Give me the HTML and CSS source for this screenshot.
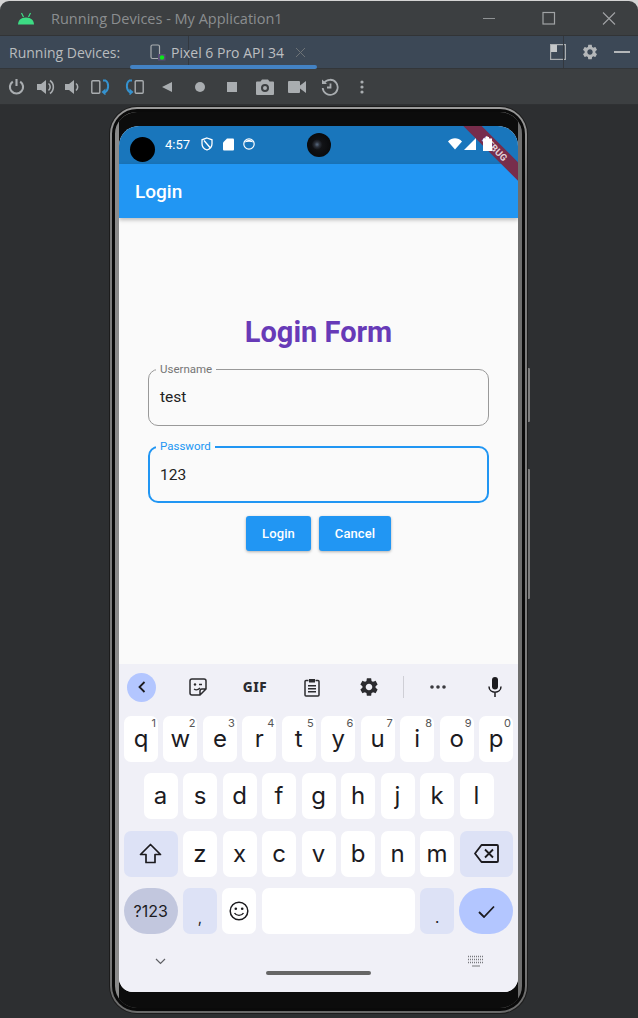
FILE: index.html
```html
<!DOCTYPE html>
<html lang="en">
<head>
  <meta charset="UTF-8">
  <title>Running Devices - My Application1</title>
  <link rel="stylesheet" href="styles.css">
</head>
<body>
  <svg class="defs" width="0" height="0">
    <symbol id="gear" viewBox="0 0 24 24">
      <path fill="currentColor" d="M19.14 12.94c.04-.3.06-.61.06-.94 0-.32-.02-.64-.07-.94l2.03-1.58c.18-.14.23-.41.12-.61l-1.92-3.32c-.12-.22-.37-.29-.59-.22l-2.39.96c-.5-.38-1.03-.7-1.62-.94l-.36-2.54c-.04-.24-.24-.41-.48-.41h-3.84c-.24 0-.43.17-.47.41l-.36 2.54c-.59.24-1.13.57-1.62.94l-2.39-.96c-.22-.08-.47 0-.59.22L2.74 8.87c-.12.21-.08.47.12.61l2.03 1.58c-.05.3-.09.63-.09.94s.02.64.07.94l-2.03 1.58c-.18.14-.23.41-.12.61l1.92 3.32c.12.22.37.29.59.22l2.39-.96c.5.38 1.03.7 1.62.94l.36 2.54c.05.24.24.41.48.41h3.84c.24 0 .44-.17.47-.41l.36-2.54c.59-.24 1.13-.56 1.62-.94l2.39.96c.22.08.47 0 .59-.22l1.92-3.32c.12-.22.07-.47-.12-.61l-2.01-1.58zM12 15.6c-1.98 0-3.6-1.62-3.6-3.6s1.62-3.6 3.6-3.6 3.6 1.62 3.6 3.6-1.62 3.6-3.6 3.6z"/>
    </symbol>
  </svg>

  <div class="window">
    <div class="title-bar">
      <svg class="android-logo" width="16" height="13" viewBox="0 0 16 13">
        <path fill="#3ddc84" d="M0 12.5C.2 8.6 2.600 5.500 8 5.500s7.800 3.100 8 7z"/>
        <path stroke="#3ddc84" stroke-width="1.200" d="M3.500 1l2 4M12.500 1l-2 4"/>
      </svg>
      <span class="window-title">Running Devices - My Application1</span>
      <div class="window-controls">
        <svg width="14" height="14" viewBox="0 0 14 14"><path stroke="#8f9294" stroke-width="1.200" d="M1 7.500h12"/></svg>
        <svg width="14" height="14" viewBox="0 0 14 14"><rect x="1" y="1.500" width="11.500" height="11.500" fill="none" stroke="#a0a3a5" stroke-width="1.200"/></svg>
        <svg width="14" height="14" viewBox="0 0 14 14"><path stroke="#a0a3a5" stroke-width="1.100" d="M1 1.500l12 12M13 1.500l-12 12"/></svg>
      </div>
    </div>

    <div class="tab-bar">
      <span class="tab-label">Running Devices:</span>
      <div class="tab">
        <svg width="16" height="17" viewBox="0 0 16 17">
          <rect x="1" y="1" width="8.500" height="13.500" rx="1.500" fill="none" stroke="#a9adb0" stroke-width="1.200"/>
          <rect x="8" y="10" width="7.500" height="6.500" fill="#5a4a78"/>
          <circle cx="12" cy="13.500" r="2.200" fill="#0be81a"/>
        </svg>
        <span class="tab-name">Pixel 6 Pro API 34</span>
        <svg width="11" height="11" viewBox="0 0 11 11"><path stroke="#6e7377" stroke-width="1" d="M1 1l9 9M10 1l-9 9"/></svg>
      </div>
      <div class="tab-actions">
        <svg width="16" height="16" viewBox="0 0 16 16">
          <rect x=".6" y=".6" width="14.800" height="14.800" fill="none" stroke="#a9adb0" stroke-width="1.200"/>
          <rect x="1" y="1" width="6" height="7" fill="#c4c7c9"/>
        </svg>
        <svg class="tab-gear" width="18" height="18"><use href="#gear"/></svg>
        <svg width="16" height="4" viewBox="0 0 16 4"><rect y="1" width="16" height="2" fill="#b4b7b9"/></svg>
      </div>
    </div>

    <div class="toolbar">
      <span class="tool tool-power">
        <svg width="17" height="17" viewBox="0 0 16 16"><path fill="none" stroke="#a9adb0" stroke-width="2" d="M4.500 3.300a6.200 6.200 0 1 0 7 0M8 1v6.500"/></svg>
      </span>
      <span class="tool tool-volup">
        <svg width="18" height="16" viewBox="0 0 18 16"><path fill="#a9adb0" d="M0 5h4l5-4v14l-5-4H0z"/><path fill="none" stroke="#a9adb0" stroke-width="1.600" d="M11.500 4.500a4.500 4.500 0 0 1 0 7M13 1.500a8 8 0 0 1 0 13"/></svg>
      </span>
      <span class="tool tool-voldown">
        <svg width="14" height="16" viewBox="0 0 14 16"><path fill="#a9adb0" d="M0 5h4l5-4v14l-5-4H0z"/><path fill="none" stroke="#a9adb0" stroke-width="1.600" d="M11 4.500a4.500 4.500 0 0 1 0 7"/></svg>
      </span>
      <span class="tool tool-rotate">
        <svg width="19" height="16" viewBox="0 0 19 16"><rect x=".8" y="1.800" width="8" height="12.400" rx="1" fill="none" stroke="#a9adb0" stroke-width="1.400"/><path fill="none" stroke="#3592cf" stroke-width="2" d="M12 1.500h2.500c3.500 2 3.500 9 0 11.500H13"/><path fill="#3592cf" d="M14.500 9.500v7L10.500 13z"/></svg>
      </span>
      <span class="tool">
        <svg width="19" height="16" viewBox="0 0 19 16"><rect x="10.200" y="1.800" width="8" height="12.400" rx="1" fill="none" stroke="#a9adb0" stroke-width="1.400"/><path fill="none" stroke="#3592cf" stroke-width="2" d="M7 1.500H4.500C1 3.500 1 10.500 4.500 13H6"/><path fill="#3592cf" d="M4.500 9.500v7L8.500 13z"/></svg>
      </span>
      <span class="tool">
        <svg width="12" height="12" viewBox="0 0 12 12"><path fill="#a9adb0" d="M11 1v10L1 6z"/></svg>
      </span>
      <span class="tool">
        <svg width="12" height="12" viewBox="0 0 12 12"><circle cx="6" cy="6" r="5" fill="#a9adb0"/></svg>
      </span>
      <span class="tool">
        <svg width="12" height="12" viewBox="0 0 12 12"><rect x="1" y="1" width="10" height="10" fill="#a9adb0"/></svg>
      </span>
      <span class="tool">
        <svg width="18" height="16" viewBox="0 0 18 16"><path fill="#a9adb0" fill-rule="evenodd" d="M6 .5h6l1.500 2H17a1 1 0 0 1 1 1V15a1 1 0 0 1-1 1H1a1 1 0 0 1-1-1V3.500a1 1 0 0 1 1-1h3.500zM9 5a4 4 0 1 0 0 8 4 4 0 0 0 0-8zm0 2a2 2 0 1 1 0 4 2 2 0 0 1 0-4z"/></svg>
      </span>
      <span class="tool">
        <svg width="18" height="14" viewBox="0 0 18 14"><path fill="#a9adb0" d="M1 1h10a1 1 0 0 1 1 1v3.500L18 1v12l-6-4.500V12a1 1 0 0 1-1 1H1a1 1 0 0 1-1-1V2a1 1 0 0 1 1-1z"/></svg>
      </span>
      <span class="tool">
        <svg width="18" height="18" viewBox="0 0 18 18"><path fill="none" stroke="#a9adb0" stroke-width="1.800" d="M3 5a7.500 7.500 0 1 1-1.300 5M9.500 5.500V9.500H6"/><path fill="#a9adb0" d="M1 1.500l5 4.500H1z"/></svg>
      </span>
      <span class="tool">
        <svg width="4" height="14" viewBox="0 0 4 14"><circle cx="2" cy="2" r="1.600" fill="#a9adb0"/><circle cx="2" cy="7" r="1.600" fill="#a9adb0"/><circle cx="2" cy="12" r="1.600" fill="#a9adb0"/></svg>
      </span>
    </div>

    <div class="device-area">
      <div class="phone">
        <span class="side-button side-button-top"></span>
        <span class="side-button side-button-bottom"></span>
        <div class="phone-rim">
          <div class="phone-bezel">
            <div class="screen">
              <span class="punch-hole"></span>
              <span class="front-camera"></span>
              <span class="debug-banner">DEBUG</span>

              <div class="status-bar">
                <span class="status-time">4:57</span>
                <svg class="status-icon" width="12" height="14" viewBox="0 0 12 14"><path fill="none" stroke="#fff" stroke-width="1.300" d="M6 1l5 1.800v4C11 10 8.800 12 6 13 3.200 12 1 10 1 6.800v-4zM3 3.500l6 7"/></svg>
                <svg class="status-icon" width="11" height="13" viewBox="0 0 11 13"><path fill="#fff" d="M4 .5h6a1 1 0 0 1 1 1v10a1 1 0 0 1-1 1H1a1 1 0 0 1-1-1V4.500z"/></svg>
                <svg class="status-icon" width="12" height="12" viewBox="0 0 12 12"><circle cx="6" cy="6" r="5.200" fill="none" stroke="#fff" stroke-width="1.200"/><path fill="#fff" d="M1.500 4.500a5 5 0 0 1 9 0C8 3.500 4 3.500 1.500 4.500z"/></svg>
                <div class="status-right">
                  <svg width="14" height="12" viewBox="0 0 14 12"><path fill="#fff" d="M0 3.500C4-.8 10-.8 14 3.500L7 11.500z"/></svg>
                  <svg width="12" height="12" viewBox="0 0 12 12"><path fill="#fff" d="M12 0v12H0z"/></svg>
                  <svg class="status-battery" width="9" height="14" viewBox="0 0 9 14"><path fill="#fff" d="M3 0h3v1.500h3V14H0V1.500h3z"/></svg>
                </div>
              </div>

              <div class="app-bar">Login</div>

              <div class="form-page">
                <h1 class="form-title">Login Form</h1>
                <div class="field">
                  <label class="field-label">Username</label>
                  <span class="field-value">test</span>
                </div>
                <div class="field field-focused">
                  <label class="field-label">Password</label>
                  <span class="field-value">123</span>
                </div>
                <div class="form-actions">
                  <button class="form-button form-button-login">Login</button>
                  <button class="form-button form-button-cancel">Cancel</button>
                </div>
              </div>

              <div class="keyboard">
                <div class="kb-toolbar">
                  <span class="kb-back">
                    <svg width="10" height="12" viewBox="0 0 10 12"><path fill="none" stroke="#1c1b1f" stroke-width="1.800" d="M7.500 1L2.500 6l5 5"/></svg>
                  </span>
                  <span class="kb-tool kb-tool-first">
                    <svg width="18" height="18" viewBox="0 0 18 18"><path fill="none" stroke="#2b2b2f" stroke-width="1.500" d="M3 1h12a2 2 0 0 1 2 2v8l-6 6H3a2 2 0 0 1-2-2V3a2 2 0 0 1 2-2zM17 11h-4a2 2 0 0 0-2 2v4"/><path fill="none" stroke="#2b2b2f" stroke-width="1.300" d="M5 11c2 1.500 4 1 6-1M10 6.500h3"/><circle cx="6" cy="6.500" r="1.200" fill="#2b2b2f"/></svg>
                  </span>
                  <span class="kb-tool kb-gif">GIF</span>
                  <span class="kb-tool">
                    <svg width="16" height="19" viewBox="0 0 16 19"><path fill="none" stroke="#2b2b2f" stroke-width="1.500" d="M4.500 2.500H2a1 1 0 0 0-1 1V17a1 1 0 0 0 1 1h12a1 1 0 0 0 1-1V3.500a1 1 0 0 0-1-1h-2.500"/><path fill="#2b2b2f" d="M5 1h6v3.500H5zM4 7h8v1.400H4zM4 10h8v1.400H4zM4 13h8v1.400H4z"/></svg>
                  </span>
                  <span class="kb-tool kb-gear">
                    <svg width="22" height="22"><use href="#gear"/></svg>
                  </span>
                  <span class="kb-divider"></span>
                  <span class="kb-tool">
                    <svg width="16" height="4" viewBox="0 0 16 4"><circle cx="2" cy="2" r="1.800" fill="#3a3a3f"/><circle cx="8" cy="2" r="1.800" fill="#3a3a3f"/><circle cx="14" cy="2" r="1.800" fill="#3a3a3f"/></svg>
                  </span>
                  <span class="kb-tool">
                    <svg width="14" height="20" viewBox="0 0 14 20"><rect x="4" y="0" width="6" height="12.500" rx="3" fill="#1c1b1f"/><path fill="none" stroke="#1c1b1f" stroke-width="1.500" d="M1 9.500c0 7.500 12 7.500 12 0M7 15.500V20"/></svg>
                  </span>
                </div>

                <div class="kb-row">
                  <span class="key">q<sup class="key-hint">1</sup></span>
                  <span class="key">w<sup class="key-hint">2</sup></span>
                  <span class="key">e<sup class="key-hint">3</sup></span>
                  <span class="key">r<sup class="key-hint">4</sup></span>
                  <span class="key">t<sup class="key-hint">5</sup></span>
                  <span class="key">y<sup class="key-hint">6</sup></span>
                  <span class="key">u<sup class="key-hint">7</sup></span>
                  <span class="key">i<sup class="key-hint">8</sup></span>
                  <span class="key">o<sup class="key-hint">9</sup></span>
                  <span class="key">p<sup class="key-hint">0</sup></span>
                </div>
                <div class="kb-row kb-row-home">
                  <span class="key">a</span>
                  <span class="key">s</span>
                  <span class="key">d</span>
                  <span class="key">f</span>
                  <span class="key">g</span>
                  <span class="key">h</span>
                  <span class="key">j</span>
                  <span class="key">k</span>
                  <span class="key">l</span>
                </div>
                <div class="kb-row">
                  <span class="key key-wide key-alt">
                    <svg width="23" height="21" viewBox="0 0 23 21"><path fill="none" stroke="#1c1b1f" stroke-width="1.700" stroke-linejoin="round" d="M11.500 1.500L1.500 11.500H7V19.500H16V11.500H21.500z"/></svg>
                  </span>
                  <span class="key">z</span>
                  <span class="key">x</span>
                  <span class="key">c</span>
                  <span class="key">v</span>
                  <span class="key">b</span>
                  <span class="key">n</span>
                  <span class="key">m</span>
                  <span class="key key-wide key-alt">
                    <svg width="25" height="19" viewBox="0 0 25 19"><path fill="none" stroke="#1c1b1f" stroke-width="1.800" stroke-linejoin="round" d="M7.500 1H23a1 1 0 0 1 1 1v15a1 1 0 0 1-1 1H7.500L1 9.500zM11 5.500l8 8M19 5.500l-8 8"/></svg>
                  </span>
                </div>
                <div class="kb-row">
                  <span class="key key-wide key-symbols">?123</span>
                  <span class="key key-alt key-punct">,</span>
                  <span class="key">
                    <svg width="20" height="20" viewBox="0 0 20 20"><circle cx="10" cy="10" r="8.800" fill="none" stroke="#1c1b1f" stroke-width="1.500"/><circle cx="6.800" cy="7.800" r="1.300" fill="#1c1b1f"/><circle cx="13.200" cy="7.800" r="1.300" fill="#1c1b1f"/><path fill="none" stroke="#1c1b1f" stroke-width="1.400" d="M5.500 12c2 3.200 7 3.200 9 0"/></svg>
                  </span>
                  <span class="key key-space"></span>
                  <span class="key key-alt key-punct">.</span>
                  <span class="key key-wide key-enter">
                    <svg width="17" height="13" viewBox="0 0 17 13"><path fill="none" stroke="#1c1b1f" stroke-width="1.800" d="M1 7l5 5L16 1.500"/></svg>
                  </span>
                </div>

                <div class="kb-nav">
                  <svg width="11" height="7" viewBox="0 0 11 7"><path fill="none" stroke="#5f6065" stroke-width="1.200" d="M1 1l4.500 4.500L10 1"/></svg>
                  <svg width="16" height="12" viewBox="0 0 16 12"><path stroke="#77787d" stroke-width="1.400" stroke-dasharray="1 1" d="M0 1.500h16M0 4.500h16M0 7.500h16"/><path stroke="#77787d" stroke-width="1.200" d="M4 11h8"/></svg>
                </div>
                <div class="home-bar"></div>
              </div>
            </div>
          </div>
        </div>
      </div>
    </div>
  </div>
</body>
</html>
```

FILE: styles.css
```css
* {
  box-sizing: border-box;
}

html, body {
  margin: 0;
  height: 100%;
}

body {
  background-color: #d4d4d4;
  overflow: hidden;
  font-family: "Open Sans", sans-serif;
}

.defs {
  position: absolute;
}

.window {
  display: flex;
  flex-direction: column;
  height: 1018px;
  margin-top: 1px;
  background-color: #3c3f41;
  border-radius: 9px 9px 0 0;
  overflow: hidden;
}

/* title bar */
.title-bar {
  display: flex;
  align-items: center;
  height: 35px;
  padding-left: 18px;
  flex-shrink: 0;
  border-bottom: 1px solid #323436;
}

.window-title {
  margin-left: 17px;
  font-size: 14.500px;
  color: #8b8e90;
}

.window-controls {
  display: flex;
  align-items: center;
  gap: 46px;
  margin-left: auto;
  margin-right: 22px;
}

/* tab bar */
.tab-bar {
  position: relative;
  display: flex;
  align-items: center;
  height: 33px;
  flex-shrink: 0;
  padding-left: 9px;
  background-color: #3c4856;
  border-bottom: 1px solid #333639;
}

.tab-bar::before,
.tab-bar::after {
  content: "";
  position: absolute;
  top: 0;
  bottom: 0;
  width: 1px;
  background-color: #33383f;
}

.tab-bar::before { left: 188px; }
.tab-bar::after { left: 563px; }

.tab-label {
  width: 121px;
  font-size: 14px;
  color: #b9bcbe;
  white-space: nowrap;
}

.tab {
  position: relative;
  display: flex;
  align-items: center;
  width: 187px;
  height: 32px;
  padding-left: 20px;
  gap: 5px;
}

.tab::after {
  content: "";
  position: absolute;
  left: 0;
  right: 0;
  bottom: -1px;
  height: 4px;
  border-radius: 2px;
  background-color: #4382c4;
}

.tab-name {
  width: 119px;
  font-size: 14px;
  color: #bcbfc1;
  white-space: nowrap;
}

.tab-actions {
  display: flex;
  align-items: center;
  gap: 15px;
  margin-left: auto;
  margin-right: 8px;
}

.tab-gear {
  color: #b4b7b9;
}

/* emulator toolbar */
.toolbar {
  display: flex;
  align-items: center;
  height: 36px;
  padding-left: 2.500px;
  flex-shrink: 0;
  border-bottom: 1px solid #2f3133;
}

.tool {
  display: flex;
  align-items: center;
  justify-content: center;
  width: 32.500px;
  height: 100%;
}

.tool-power { width: 28px; }
.tool-volup { width: 30px; }
.tool-voldown { width: 22px; }
.tool-rotate { width: 36px; }

/* device */
.device-area {
  position: relative;
  flex: 1;
  background-color: #2d2f31;
  padding: 1px 1px 0 0;
}

.phone {
  position: relative;
  width: 419px;
  height: 908px;
  margin: 0 auto;
  padding: 1px;
  border-radius: 28px;
  background-color: #1c1c1c;
}

.phone-rim {
  height: 100%;
  padding: 2px;
  border-radius: 27px;
  background: linear-gradient(#9a9a9a, #7c7c7c 8%, #7c7c7c 92%, #6a6a6a);
}

.phone-bezel {
  height: 100%;
  padding: 14px 0 0;
  border-radius: 25px;
  border: 3px solid #0a0a0a;
  background: linear-gradient(90deg, #8a8a8a 4px, #0c0c0c 4px, #0c0c0c calc(100% - 4px), #6e6e6e calc(100% - 4px));
  background-clip: padding-box;
}

.side-button {
  position: absolute;
  right: -2px;
  width: 2px;
  background-color: #7d7d7d;
  border-radius: 0 1px 1px 0;
}

.side-button-top { top: 262px; height: 54px; }
.side-button-bottom { top: 363px; height: 130px; }

.screen {
  position: relative;
  display: flex;
  flex-direction: column;
  width: 399px;
  height: 866px;
  margin: 0 auto;
  border-radius: 20px 20px 14px 14px;
  overflow: hidden;
  background-color: #fafafa;
  font-family: Roboto, sans-serif;
}

.punch-hole {
  position: absolute;
  left: 11px;
  top: 11px;
  width: 25px;
  height: 25px;
  border-radius: 50%;
  background-color: #000;
}

.front-camera {
  position: absolute;
  left: 188px;
  top: 7px;
  width: 24px;
  height: 24px;
  border-radius: 50%;
  background:
    radial-gradient(circle at 42% 48%, #5a6a80 0, #2a2f38 14%, transparent 28%),
    radial-gradient(circle at 50% 50%, #15171b 0, #0b0c0e 60%, #050505 100%);
  z-index: 2;
}

.debug-banner {
  position: absolute;
  left: 326px;
  top: 16px;
  width: 100px;
  height: 13px;
  transform: rotate(45deg);
  background-color: #772d4c;
  color: rgba(255, 255, 255, 0.8);
  font-size: 9.500px;
  font-weight: 700;
  line-height: 13px;
  text-align: center;
  letter-spacing: 0.2px;
}

/* status bar */
.status-bar {
  display: flex;
  align-items: center;
  height: 38px;
  padding: 0 26px 2px 46px;
  background-color: #1976bc;
  flex-shrink: 0;
}

.status-time {
  width: 36px;
  font-size: 13px;
  color: #fff;
}

.status-icon {
  margin-right: 9.500px;
}

.status-right {
  position: relative;
  display: flex;
  align-items: center;
  gap: 2px;
  margin-left: auto;
}

.status-battery {
  margin-left: 5px;
}

.app-bar {
  display: flex;
  align-items: center;
  height: 54px;
  padding-left: 16px;
  flex-shrink: 0;
  background-color: #2196f3;
  color: #fff;
  font-size: 19px;
  font-weight: 500;
  box-shadow: 0 2px 4px rgba(0, 0, 0, 0.25);
}

/* form */
.form-page {
  display: flex;
  flex-direction: column;
  align-items: center;
  height: 446px;
  padding: 96px 29px 0;
}

.form-title {
  margin: 0 0 18px;
  font-size: 29px;
  line-height: 37px;
  font-weight: 700;
  color: #673ab7;
}

.field {
  position: relative;
  display: flex;
  align-items: center;
  width: 100%;
  height: 57px;
  margin-bottom: 20px;
  padding: 0 11px 2px;
  border: 1px solid #999;
  border-radius: 10px;
}

.field-focused {
  height: 57px;
  margin-bottom: 13px;
  padding: 0 10px;
  border: 2px solid #2196f3;
}

.field-label {
  position: absolute;
  left: 7px;
  top: -8px;
  padding: 0 4px;
  background-color: #fafafa;
  font-size: 11.500px;
  line-height: 14px;
  color: #757575;
}

.field-focused .field-label {
  left: 6px;
  top: -9px;
  color: #2196f3;
}

.field-value {
  font-size: 15.500px;
  color: #222;
}

.form-actions {
  display: flex;
  gap: 8px;
}

.form-button {
  height: 35px;
  padding: 0;
  border: none;
  border-radius: 3px;
  background-color: #2196f3;
  color: #fff;
  font-family: Roboto, sans-serif;
  font-size: 13px;
  font-weight: 500;
  letter-spacing: 0.1px;
  box-shadow: 0 1px 3px rgba(0, 0, 0, 0.3);
}

.form-button-login { width: 65px; }
.form-button-cancel { width: 72px; }

/* keyboard */
.keyboard {
  flex: 1;
  padding: 0 5px;
  background-color: #f0f0f7;
  font-family: Inter, sans-serif;
  color: #1c1b1f;
}

.kb-toolbar {
  display: flex;
  align-items: center;
  height: 46px;
  margin-bottom: 6px;
  padding-left: 3px;
}

.kb-back {
  display: flex;
  align-items: center;
  justify-content: center;
  flex-shrink: 0;
  width: 29px;
  height: 29px;
  border-radius: 50%;
  background-color: #b3c6ff;
}

.kb-tool {
  display: flex;
  align-items: center;
  justify-content: center;
  flex-shrink: 0;
  width: 57px;
}

.kb-tool-first {
  margin-left: 13.500px;
}

.kb-gif {
  font-size: 13.500px;
  font-weight: 800;
  letter-spacing: 0.6px;
  color: #2b2b2f;
  font-family: "Noto Sans", sans-serif;
}

.kb-gear {
  color: #2b2b2f;
}

.kb-divider {
  flex-shrink: 0;
  width: 1px;
  height: 22px;
  margin: 0 5.500px;
  background-color: #cfcfd6;
}

.kb-row {
  display: flex;
  gap: 5.500px;
  height: 46px;
  margin-bottom: 11.400px;
}

.kb-row-home {
  padding: 0 19.500px;
}

.key {
  position: relative;
  display: flex;
  align-items: center;
  justify-content: center;
  flex: 1 1 0;
  min-width: 0;
  border-radius: 7px;
  background-color: #fff;
  font-size: 24px;
  line-height: 1;
}

.key-hint {
  position: absolute;
  top: 2px;
  right: 2px;
  font-size: 11px;
  line-height: 1;
  color: #555;
}

.key-wide {
  flex: 0 0 53.500px;
}

.key-alt {
  background-color: #dde2f6;
}

.key-symbols {
  border-radius: 23px;
  background-color: #c2c7de;
  font-size: 16px;
}

.key-enter {
  border-radius: 23px;
  background-color: #b3c6ff;
}

.key-punct {
  align-items: flex-end;
  padding-bottom: 9px;
  font-size: 15px;
}

.key-space {
  flex: 0 0 153px;
}

.kb-nav {
  display: flex;
  align-items: center;
  justify-content: space-between;
  margin-top: 21px;
  padding: 0 29px 0 31px;
  height: 12px;
}

.home-bar {
  width: 105px;
  height: 4px;
  margin: 4px auto 0;
  border-radius: 2px;
  background-color: #666;
}
```
